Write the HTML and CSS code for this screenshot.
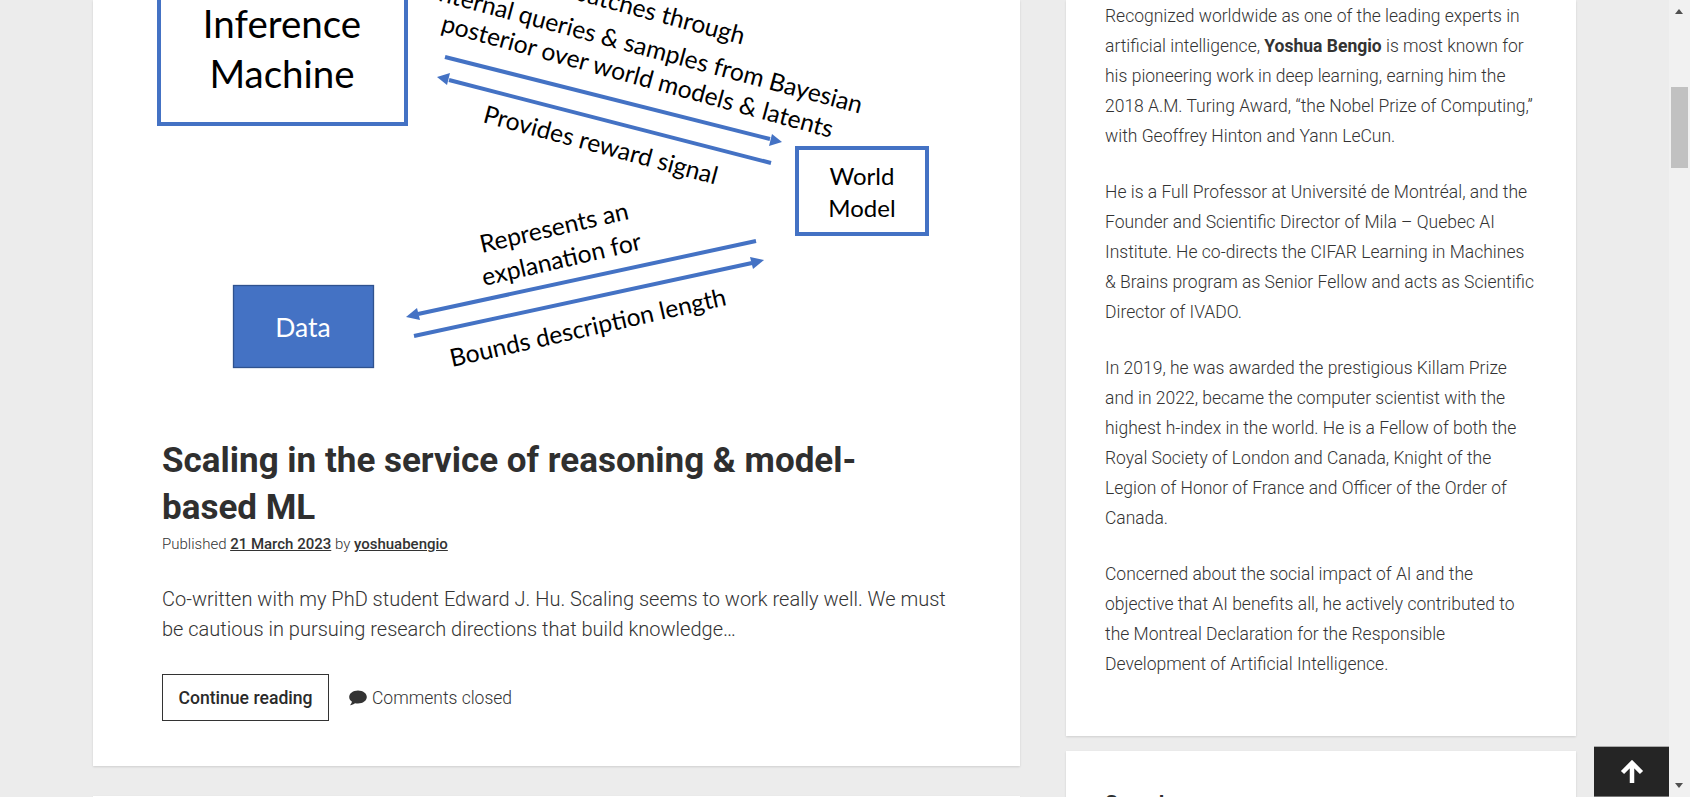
FILE: index.html
```html
<!DOCTYPE html>
<html lang="en">
<head>
<meta charset="utf-8">
<title>Yoshua Bengio</title>
<link rel="stylesheet" href="styles.css">
</head>
<body>
<div class="page">
  <div class="content">
    <main class="main-col">
      <article class="card post">
        <svg class="figure" viewBox="0 0 927 437" width="927" height="437" role="img" aria-label="Diagram">
          <g transform="translate(-93 0)">
            <rect class="box" x="159" y="-40" width="247" height="164"/>
            <text class="t-big" x="282" y="38">Inference</text>
            <text class="t-big" x="282" y="88">Machine</text>
            <rect class="box" x="797" y="148" width="130" height="86"/>
            <text class="t-mid" x="862" y="185">World</text>
            <text class="t-mid" x="862" y="217">Model</text>
            <rect class="box-fill" x="233.5" y="285.5" width="140" height="82"/>
            <text class="t-data" x="303" y="337">Data</text>

            <line class="wire" x1="445" y1="57" x2="770" y2="139"/>
            <polygon class="head" points="782,142 769,146 772,134"/>
            <line class="wire" x1="449" y1="80" x2="771" y2="163"/>
            <polygon class="head" points="437,77 450,73 447,85"/>
            <line class="wire" x1="756" y1="241" x2="418" y2="314"/>
            <polygon class="head" points="406,317 417,308 420,320"/>
            <line class="wire" x1="414" y1="336" x2="752" y2="263"/>
            <polygon class="head" points="764,260 753,269 750,257"/>

            <text class="t-lab" transform="translate(460 -31) rotate(15)">Generates batches through</text>
            <text class="t-lab" transform="translate(432 -1) rotate(15)">internal queries &amp; samples from Bayesian</text>
            <text class="t-lab" transform="translate(440 31) rotate(15.3)">posterior over world models &amp; latents</text>
            <text class="t-lab" transform="translate(482 122) rotate(15)">Provides reward signal</text>
            <text class="t-lab" transform="translate(482 253) rotate(-13)">Represents an</text>
            <text class="t-lab" transform="translate(484 286) rotate(-13)">explanation for</text>
            <text class="t-lab" transform="translate(452 367) rotate(-12.7)">Bounds description length</text>
          </g>
        </svg>
        <div class="post-body">
          <h2 class="post-title">Scaling in the service of reasoning &amp; model-based ML</h2>
          <p class="post-meta">Published <a class="meta-link" href="#">21 March 2023</a> by <a class="meta-link" href="#">yoshuabengio</a></p>
          <p class="excerpt">Co-written with my PhD student Edward J. Hu. Scaling seems to work really well. We must be cautious in pursuing research directions that build knowledge…</p>
          <div class="post-actions">
            <a class="btn" href="#">Continue reading</a>
            <span class="comments">
              <svg class="comment-icon" viewBox="0 0 18 16" width="18" height="16" aria-hidden="true"><path d="M9 .5C4.100 .5 .2 3.400 .2 7c0 1.900 1.100 3.600 2.800 4.800-.3 1.300-1 2.500-2 3.400 1.900-.1 3.700-.9 5-2 1 .2 2 .3 3 .3 4.900 0 8.800-2.900 8.800-6.500S13.900 .5 9 .5z"/></svg>
              Comments closed
            </span>
          </div>
        </div>
      </article>
      <div class="card next-card"></div>
    </main>
    <aside class="side-col">
      <section class="card bio">
        <p>Recognized worldwide as one of the leading experts in<br>artificial intelligence, <strong>Yoshua Bengio</strong> is most known for<br>his pioneering work in deep learning, earning him the<br>2018 A.M. Turing Award, “the Nobel Prize of Computing,”<br>with Geoffrey Hinton and Yann LeCun.</p>
        <p>He is a Full Professor at Université de Montréal, and the<br>Founder and Scientific Director of Mila – Quebec AI<br>Institute. He co-directs the CIFAR Learning in Machines<br>&amp; Brains program as Senior Fellow and acts as Scientific<br>Director of IVADO.</p>
        <p>In 2019, he was awarded the prestigious Killam Prize<br>and in 2022, became the computer scientist with the<br>highest h-index in the world. He is a Fellow of both the<br>Royal Society of London and Canada, Knight of the<br>Legion of Honor of France and Officer of the Order of<br>Canada.</p>
        <p>Concerned about the social impact of AI and the<br>objective that AI benefits all, he actively contributed to<br>the Montreal Declaration for the Responsible<br>Development of Artificial Intelligence.</p>
      </section>
      <section class="card widget">
        <h3 class="widget-title">Search</h3>
      </section>
    </aside>
  </div>
  <div class="scrollbar" aria-hidden="true">
    <span class="sb-arrow sb-up"></span>
    <span class="sb-thumb"></span>
    <span class="sb-arrow sb-down"></span>
  </div>
  <a class="to-top" href="#" aria-label="Back to top">
    <svg viewBox="0 0 24 24" width="24" height="24" aria-hidden="true"><path class="to-top-arrow" d="M12 23V3M2.500 12.500L12 3l9.500 9.500"/></svg>
  </a>
</div>
</body>
</html>
```
FILE: styles.css
```css
* { box-sizing: border-box; }
html, body { margin: 0; height: 100%; overflow: hidden; }
body {
  background: #ececec;
  color: #333;
  font-family: Roboto, "Liberation Sans", sans-serif;
  font-weight: 300;
}
.page { position: relative; display: flex; height: 797px; overflow: hidden; }
.content {
  flex: 1;
  display: flex;
  gap: 46px;
  padding-left: 93px;
  align-items: flex-start;
  min-width: 0;
}
.main-col { width: 927px; flex: none; }
.side-col { width: 510px; flex: none; }
.card {
  background: #fff;
  box-shadow: 0 1px 2px rgba(0,0,0,.12);
}
.figure { display: block; }
.box { fill: #fff; stroke: #4472c4; stroke-width: 4; }
.box-fill { fill: #4472c4; stroke: #2f528f; stroke-width: 1.3; }
.wire { stroke: #4472c4; stroke-width: 4; }
.head { fill: #4472c4; }
.figure text { font-family: Lato, "Open Sans", sans-serif; font-weight: 400; fill: #000; }
.t-big { font-size: 38.5px; text-anchor: middle; }
.t-mid { font-size: 24px; text-anchor: middle; }
.figure .t-data { font-size: 26.5px; text-anchor: middle; fill: #fff; }
.t-lab { font-size: 24.6px; }

.post-body { padding: 0 69px 45px; }
.post-title {
  margin: 0;
  font-size: 35px;
  line-height: 47px;
  font-weight: 700;
  color: #2f2f2f;
}
.post-meta { margin: 0; padding-top: 2px; font-size: 15px; line-height: 22px; }
.meta-link { color: #333; font-weight: 500; text-decoration: underline; }
.excerpt { margin: 29px 0 0; font-size: 20px; line-height: 30px; }
.post-actions { display: flex; align-items: center; gap: 20px; margin-top: 30px; }
.btn {
  display: block;
  height: 47px;
  width: 167px;
  border: 1px solid #333;
  color: #2a2a2a;
  font-size: 17.6px;
  font-weight: 500;
  line-height: 47px;
  text-align: center;
  text-decoration: none;
}
.comments { display: flex; align-items: center; gap: 5px; font-size: 17.5px; }
.comment-icon { fill: #333; display: block; }
.next-card { height: 60px; margin-top: 30px; }

.bio { height: 736px; padding: 1px 30px 0 39px; font-size: 17.5px; line-height: 30px; white-space: nowrap; }
.bio p { margin: 0 0 26px; }
.bio strong { font-weight: 700; }
.widget { margin-top: 15px; height: 120px; padding: 37px 39px 0; }
.widget-title { margin: 0; font-size: 21px; line-height: 30px; font-weight: 700; color: #2f2f2f; }

.scrollbar {
  flex: none;
  width: 21px;
  background: #f1f1f1;
  position: relative;
}
.sb-arrow { position: absolute; left: 6px; width: 0; height: 0; border-left: 4.5px solid transparent; border-right: 4.5px solid transparent; }
.sb-up { top: 9px; border-bottom: 5px solid #505050; }
.sb-down { bottom: 9px; border-top: 5px solid #505050; }
.sb-thumb { position: absolute; top: 87px; left: 2px; width: 17px; height: 81px; background: #c1c1c1; }
.to-top {
  position: absolute;
  right: 21px;
  bottom: 0;
  width: 75px;
  height: 51px;
  background: #252525;
  border-top: 1px solid #aaa;
  border-bottom: 1px solid #777;
  display: flex;
  align-items: center;
  justify-content: center;
}
.to-top-arrow { fill: none; stroke: #fff; stroke-width: 4.5; }
```
